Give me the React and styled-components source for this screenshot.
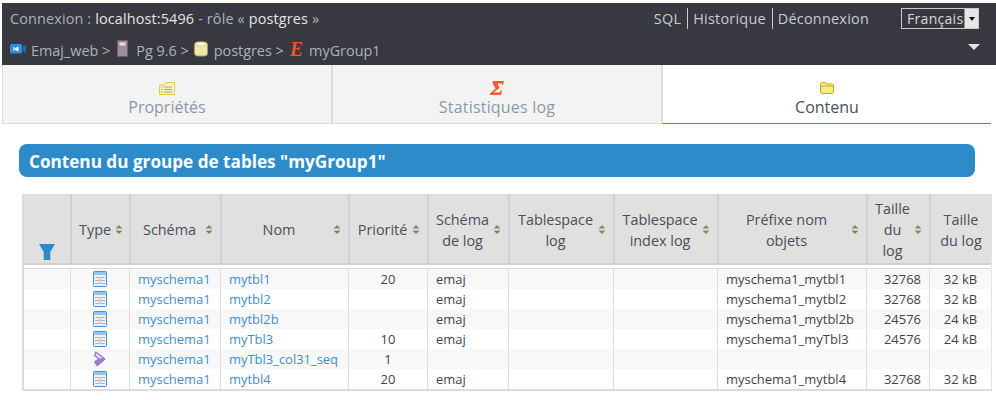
import React from "react";
import styled, { createGlobalStyle } from "styled-components";

const Global = createGlobalStyle`
  html, body {
    margin: 0;
    background: #fff;
    font-family: "Open Sans", "Noto Sans", sans-serif;
    font-size: 13px;
  }
`;

const Page = styled.div`
  width: 996px;
  height: 400px;
  overflow: hidden;
  padding: 3px 0 0 2px;
  box-sizing: border-box;
`;

const TopBar = styled.div`
  background: #383840;
  height: 62px;
  padding: 0 0 0 8px;
  color: #a9b4bd;
  font-size: 14.4px;
  display: flex;
  flex-direction: column;
`;

const TopRow = styled.div`
  display: flex;
  align-items: center;
  height: 31px;
  white-space: nowrap;
`;

const Conn = styled.div`
  flex: 1;
  letter-spacing: 0.15px;
  b {
    font-weight: 400;
    color: #e4e4e4;
  }
`;

const NavLink = styled.a`
  color: #c8ccd2;
  padding: 0 6px 0 5px;
  line-height: 21px;
  letter-spacing: 0.25px;
  border-left: ${(p) => (p.$first ? "none" : "1px solid #c8ccd2")};
`;

const LangBox = styled.div`
  margin: 0 17px 0 26px;
  width: 78px;
  height: 21px;
  box-sizing: border-box;
  border: 1px solid #c9c9c9;
  color: #d8d8d8;
  display: flex;
  justify-content: space-between;
  padding-left: 5px;
  line-height: 19px;
  font-size: 14px;
  letter-spacing: 0.3px;
`;

const LangArrow = styled.span`
  width: 13px;
  background: #e6e6e6;
  border-left: 1px solid #999;
  display: flex;
  align-items: center;
  justify-content: center;
  &::after {
    content: "";
    border: 3px solid transparent;
    border-top: 4px solid #111;
    margin-top: 4px;
  }
`;

const Crumbs = styled.div`
  flex: 1;
  display: flex;
  align-items: center;
  margin-top: 2px;
`;

const CrumbIcon = styled.span`
  display: inline-flex;
  margin: ${(p) => p.$m};
  transform: translateY(-2px);
`;

const EmajMark = styled.span`
  font-family: "Liberation Serif", serif;
  font-style: italic;
  font-weight: 700;
  color: #f0562b;
  font-size: 20px;
  line-height: 16px;
`;

const Collapse = styled.span`
  margin-right: 16px;
  border: 6px solid transparent;
  border-top: 6px solid #e4e4e4;
  border-bottom: 0;
  transform: translateY(-3px);
`;

const Tabs = styled.div`
  display: grid;
  grid-template-columns: 330px 330px 329px;
  height: 59px;
  width: 989px;
`;

const Tab = styled.div`
  display: flex;
  flex-direction: column;
  align-items: center;
  padding-top: 15px;
  box-sizing: border-box;
  background: ${(p) => (p.$active ? "#fff" : "#f3f3f3")};
  color: ${(p) => (p.$active ? "#46505c" : "#8c9aa8")};
  border-left: 1px solid #dcdcdc;
  border-right: ${(p) => (p.$active ? "none" : "1px solid #dcdcdc")};
  border-bottom: 1px solid ${(p) => (p.$active ? "#3a8bc4" : "#dcdcdc")};
  font-size: 16px;
  letter-spacing: ${(p) => p.$track || 0}px;
  line-height: 22px;
`;

const TabIcon = styled.span`
  height: 16px;
  display: flex;
  align-items: center;
`;

const Title = styled.h2`
  margin: 20px 21px 17px 17px;
  height: 33px;
  line-height: 35px;
  padding-left: 10px;
  background: #2e8bc9;
  border-radius: 8px;
  color: #fff;
  font-size: 17.15px;
  font-weight: 700;
`;

const Table = styled.table`
  margin-left: 20px;
  width: 970px;
  table-layout: fixed;
  border-collapse: separate;
  border-spacing: 0;
  border-bottom: 2px solid #dcdcdc;
  border-left: 2px solid #dcdcdc;
  border-right: 1px solid #e4e4e4;
`;

const Th = styled.th`
  background: #e0e0e0;
  height: 71px;
  padding: ${(p) => (p.$filter ? "0 7px" : "2px 7px 0")};
  box-sizing: border-box;
  font-weight: 400;
  font-size: 14.4px;
  line-height: 21px;
  color: #4a4f58;
  border-left: 2px solid #d0d0d0;
  border-bottom: 2px solid #d0d0d0;
  vertical-align: ${(p) => (p.$filter ? "bottom" : "middle")};
  text-align: center;
  &:first-child {
    border-left: none;
  }
`;

const ThInner = styled.div`
  display: flex;
  align-items: center;
  gap: 4px;
  span {
    flex: 1;
  }
  svg {
    flex: none;
  }
`;

const Tr = styled.tr`
  background: ${(p) => (p.$odd ? "#f8f8f8" : "#fff")};
`;

const Td = styled.td`
  height: 20px;
  padding: 0 8px;
  box-sizing: border-box;
  font-size: 12.96px;
  line-height: 19px;
  color: #3f444c;
  white-space: nowrap;
  overflow: hidden;
  border-left: 1px solid #dedede;
  text-align: ${(p) => p.$align || "left"};
  &:first-child {
    border-left: none;
  }
`;

const Spacer = styled.td`
  height: 3px;
  padding: 0;
  border-bottom: 1px solid #d8d8d8;
`;

const Link = styled.a`
  color: #3d8fd1;
`;

const SortArrows = () => (
  <svg width="8" height="9" viewBox="0 0 8 9">
    <path d="M4 0 7.500 3.600H.5zM4 9 .5 5.400h7z" fill="#8c8560" />
  </svg>
);

const TableIcon = () => (
  <svg width="14" height="16" viewBox="0 0 14 16" style={{ display: "block", margin: "0 auto" }}>
    <rect x="0.5" y="0.5" width="13" height="15" rx="1" fill="#f1f1f1" stroke="#3b93e0" />
    <rect x="1" y="1" width="12" height="3" fill="#8fc6f2" />
    <path d="M2 6.500h4M8 6.500h4M2 9.500h4M8 9.500h4M2 12.500h4M8 12.500h4M7 6v7" stroke="#b0b0b0" />
  </svg>
);

const SeqIcon = () => (
  <svg width="12" height="16" viewBox="0 0 12 16" style={{ display: "block", margin: "0 auto" }}>
    <path d="M1.700.7 11.300 8 3.300 15 .3 10.700 4.700 8 .3 4.700z" fill="#9a7ed4" stroke="#8264c4" strokeWidth="0.8" />
    <path d="M2 2 8.500 7 5.500 7.500 1.500 4.500z" fill="#e6ddf7" />
  </svg>
);

const columns = [
  { w: 46, filter: true },
  { w: 59, label: "Type", sort: true },
  { w: 91, label: "Schéma", sort: true },
  { w: 128, label: "Nom", sort: true },
  { w: 79, label: "Priorité", sort: true },
  { w: 81, label: "Schéma de log", sort: true },
  { w: 105, label: "Tablespace log", sort: true },
  { w: 104, label: "Tablespace index log", sort: true },
  { w: 149, label: "Préfixe nom objets", sort: true },
  { w: 63, label: "Taille du log", sort: true },
  { w: 62, label: "Taille du log" },
];

const rows = [
  ["table", "mytbl1", "20", "emaj", "myschema1_mytbl1", "32768", "32 kB"],
  ["table", "mytbl2", "", "emaj", "myschema1_mytbl2", "32768", "32 kB"],
  ["table", "mytbl2b", "", "emaj", "myschema1_mytbl2b", "24576", "24 kB"],
  ["table", "myTbl3", "10", "emaj", "myschema1_myTbl3", "24576", "24 kB"],
  ["seq", "myTbl3_col31_seq", "1", "", "", "", ""],
  ["table", "mytbl4", "20", "emaj", "myschema1_mytbl4", "32768", "32 kB"],
];

export default function App() {
  return (
    <Page>
      <Global />
      <TopBar>
        <TopRow>
          <Conn>
            Connexion : <b>localhost:5496</b> - rôle « <b>postgres</b> »
          </Conn>
          <NavLink $first>SQL</NavLink>
          <NavLink>Historique</NavLink>
          <NavLink>Déconnexion</NavLink>
          <LangBox>
            Français
            <LangArrow />
          </LangBox>
        </TopRow>
        <TopRow>
          <Crumbs>
            <CrumbIcon $m="0 5px 0 0">
              <svg width="16" height="10" viewBox="0 0 16 10">
                <rect width="12" height="9.500" rx="1.500" fill="#2f8fdc" />
                <path d="M4 3v4M8 3 5 5l3 2z" stroke="#fff" fill="#fff" />
                <path d="M13 2.500 16 .8v8.400L13 7.500z" fill="#1f6fb0" />
              </svg>
            </CrumbIcon>
            Emaj_web &gt;
            <CrumbIcon $m="0 8px 0 7px">
              <svg width="11" height="17" viewBox="0 0 11 17">
                <rect x="0.5" y="0.5" width="10" height="16" fill="#a08d98" stroke="#6d6068" />
                <rect x="2.500" y="2.500" width="6" height="3" fill="#e4dce0" />
                <rect x="7" y="12" width="2" height="2" fill="#45b5b5" />
              </svg>
            </CrumbIcon>
            Pg 9.6 &gt;
            <CrumbIcon $m="0 6px 0 5px">
              <svg width="14" height="16" viewBox="0 0 14 16">
                <rect x="0.5" y="1" width="13" height="14" rx="3" fill="#ece7a8" stroke="#a89c58" />
                <ellipse cx="7" cy="3" rx="5.500" ry="2" fill="#fbfae0" stroke="#c4b870" strokeWidth="0.6" />
              </svg>
            </CrumbIcon>
            postgres &gt;
            <CrumbIcon $m="0 6px 0 6px">
              <EmajMark>E</EmajMark>
            </CrumbIcon>
            myGroup1
          </Crumbs>
          <Collapse />
        </TopRow>
      </TopBar>

      <Tabs>
        <Tab>
          <TabIcon>
            <svg width="16" height="13" viewBox="0 0 16 13">
              <path d="M.5 3H5l1-1 1-1.500h8.500v12H.5z" fill="#fbf3b8" stroke="#e6cf2e" />
              <path d="M2 5h1.500M2 7.500h1.500M2 10h1.500M5 5h8M5 7.500h8M5 10h8" stroke="#a0a0a0" />
            </svg>
          </TabIcon>
          Propriétés
        </Tab>
        <Tab $track={0.2}>
          <TabIcon>
            <svg width="14" height="14" viewBox="0 0 14 14">
              <path d="M3 0H14L13 4H12.200L12 2.500H7.500L9.500 7 3.500 11.500H9.500L11 9.500H12L11 14H0V12.500L5.500 7.500 2.500 2z" fill="#fb5a2c" />
            </svg>
          </TabIcon>
          Statistiques log
        </Tab>
        <Tab $active>
          <TabIcon>
            <svg width="14" height="12" viewBox="0 0 14 12">
              <path d="M.5 3V1.500L1.500.5h4l1 1.500h6l1 1v7l-1 1.500h-11L.5 10z" fill="#f7e88a" stroke="#c9ab22" />
              <path d="M1 4h12" stroke="#c9ab22" />
            </svg>
          </TabIcon>
          Contenu
        </Tab>
      </Tabs>

      <Title>Contenu du groupe de tables "myGroup1"</Title>

      <Table>
        <colgroup>
          {columns.map((c, i) => (
            <col key={i} style={{ width: c.w }} />
          ))}
        </colgroup>
        <thead>
          <tr>
            {columns.map((c, i) => (
              <Th key={i} $filter={c.filter}>
                {c.filter ? (
                  <svg width="16" height="16" viewBox="0 0 16 16" style={{ display: "block", margin: "0 auto 3px" }}>
                    <path d="M0 0h16L11.300 8v8H4.700V8z" fill="#2e8bc9" />
                  </svg>
                ) : (
                  <ThInner>
                    <span>{c.label}</span>
                    {c.sort && <SortArrows />}
                  </ThInner>
                )}
              </Th>
            ))}
          </tr>
          <tr>
            <Spacer colSpan={11} />
          </tr>
        </thead>
        <tbody>
          {rows.map((r, i) => (
            <Tr key={i} $odd={i % 2 === 0}>
              <Td />
              <Td $align="center">{r[0] === "table" ? <TableIcon /> : <SeqIcon />}</Td>
              <Td><Link>myschema1</Link></Td>
              <Td><Link>{r[1]}</Link></Td>
              <Td $align="center">{r[2]}</Td>
              <Td>{r[3]}</Td>
              <Td />
              <Td />
              <Td>{r[4]}</Td>
              <Td $align="right">{r[5]}</Td>
              <Td $align="center">{r[6]}</Td>
            </Tr>
          ))}
        </tbody>
      </Table>
    </Page>
  );
}
